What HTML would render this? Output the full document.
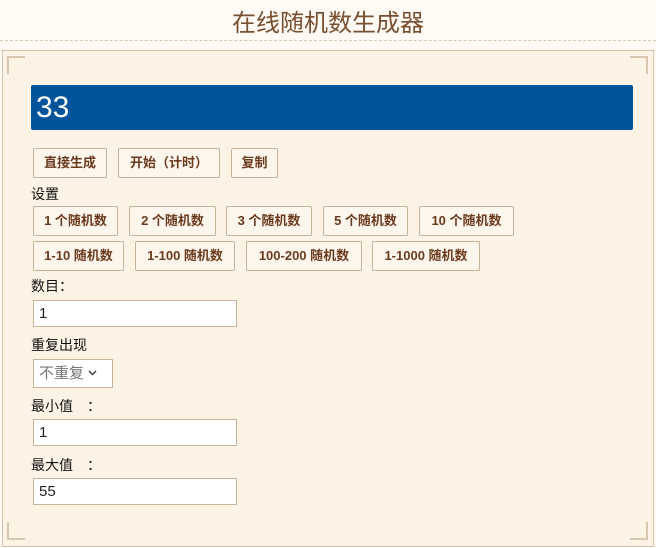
<!DOCTYPE html>
<html><head><meta charset="utf-8"><style>
body{margin:0;width:656px;height:548px;background:#fffbf4;position:relative;overflow:hidden;font-family:"Liberation Sans","Noto Sans CJK SC",sans-serif;}
.a{position:absolute;}
.title{left:0;width:656px;top:3px;text-align:center;font-size:24px;color:#7a4e30;}
.dash{left:0;width:656px;top:40px;border-top:1px dashed #d8c8b0;}
.panel{left:2px;top:50px;width:650px;height:495px;border:1px solid #d9c3a8;background:#fdf3e5;}
.bar{left:31px;top:85px;width:602px;height:45px;background:#02549a;border-radius:2px;color:#fff;font-size:30px;line-height:46px;text-indent:5px;}
.b{border:1px solid #c9b29a;border-radius:2px;background:#fdf6ec;color:#6b3a1e;font-weight:bold;font-size:13px;line-height:28px;text-align:center;box-sizing:border-box;height:30px;}
.l{font-size:14px;color:#111;}
.in{height:27px;width:204px;border:1px solid #c9b29a;background:#fff;box-sizing:border-box;font-size:15px;line-height:25px;padding-left:5px;color:#222;}
.c{border-color:#d8c6ae;border-style:solid;width:16px;height:16px;}
</style></head><body>
<div class="a title">在线随机数生成器</div>
<div class="a dash"></div>
<div class="a panel"></div>
<div class="a c" style="left:7px;top:56px;border-width:2px 0 0 2px"></div>
<div class="a c" style="left:630px;top:56px;border-width:2px 2px 0 0"></div>
<div class="a c" style="left:7px;top:522px;border-width:0 0 2px 2px"></div>
<div class="a c" style="left:630px;top:522px;border-width:0 2px 2px 0"></div>
<div class="a bar">33</div>
<div class="a b" style="left:33px;top:148px;width:74px">直接生成</div>
<div class="a b" style="left:118px;top:148px;width:102px">开始（计时）</div>
<div class="a b" style="left:231px;top:148px;width:47px">复制</div>
<div class="a l" style="left:31px;top:184px">设置</div>
<div class="a b" style="left:33px;top:206px;width:85px">1 个随机数</div>
<div class="a b" style="left:129px;top:206px;width:87px">2 个随机数</div>
<div class="a b" style="left:226px;top:206px;width:86px">3 个随机数</div>
<div class="a b" style="left:323px;top:206px;width:85px">5 个随机数</div>
<div class="a b" style="left:419px;top:206px;width:95px">10 个随机数</div>
<div class="a b" style="left:33px;top:241px;width:91px">1-10 随机数</div>
<div class="a b" style="left:135px;top:241px;width:100px">1-100 随机数</div>
<div class="a b" style="left:246px;top:241px;width:116px">100-200 随机数</div>
<div class="a b" style="left:372px;top:241px;width:108px">1-1000 随机数</div>
<div class="a l" style="left:31px;top:276px">数目：</div>
<div class="a in" style="left:33px;top:300px">1</div>
<div class="a l" style="left:31px;top:335px">重复出现</div>
<div class="a in" style="left:33px;top:359px;width:80px;height:29px;color:#777;font-size:15px;line-height:27px">不重复 <svg width="9" height="6" style="vertical-align:2px"><path d="M1 1l3.5 3.5L8 1" stroke="#555" stroke-width="1.6" fill="none"/></svg></div>
<div class="a l" style="left:31px;top:396px">最小值　：</div>
<div class="a in" style="left:33px;top:419px">1</div>
<div class="a l" style="left:31px;top:455px">最大值　：</div>
<div class="a in" style="left:33px;top:478px">55</div>
</body></html>
